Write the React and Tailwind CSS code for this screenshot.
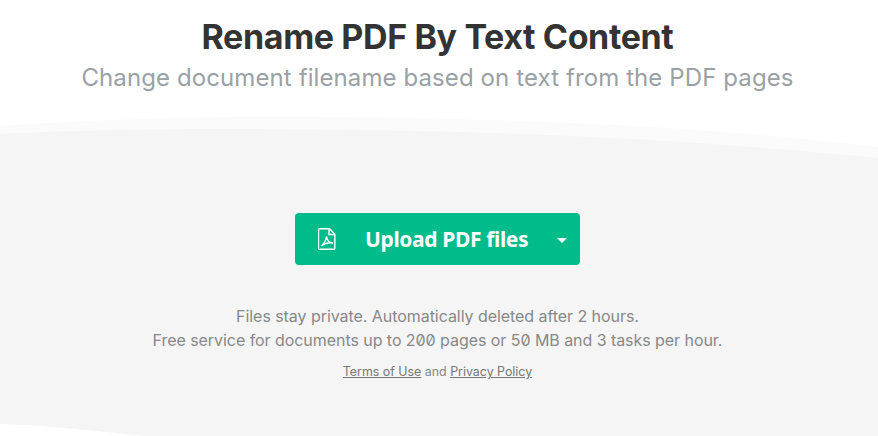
const Waves = () => (
  <svg className="absolute inset-0 w-full h-full" viewBox="0 0 878 436" preserveAspectRatio="none">
    <path d="M0 126 C 90 120 180 117 280 117 C 480 117 690 124 878 147 L878 436 L0 436 Z" fill="#fbfbfb" />
    <path d="M0 134 C 70 130 150 129 230 129 C 470 129 680 138 878 158 L878 436 L0 436 Z" fill="#f5f5f5" />
    <path d="M0 424 C 50 425 100 432 146 436 L0 436 Z" fill="#ffffff" />
  </svg>
);

const PdfIcon = () => (
  <svg width="18" height="22" viewBox="0 0 18 22" fill="none" stroke="#fff" strokeWidth="1.4">
    <path d="M1.500 .8h10l5.300 5.400v14a1 1 0 0 1-1 1H1.500a1 1 0 0 1-1-1V1.800a1 1 0 0 1 1-1z" />
    <path d="M11 .8v5.700h5.800" />
    <path d="M3 18c2.500-1.500 4.700-5 5.500-9.500.6 3.500 3 6.500 6.500 6.500-4-.6-8.500.4-12 3z" />
  </svg>
);

export default function App() {
  return (
    <div className="relative h-[436px] overflow-hidden bg-white font-['Inter',sans-serif]">
      <Waves />

      <div className="relative flex flex-col items-center pr-[3px]">
        {/* TITLE */}
        <h1 className="mt-[14px] text-[34px] leading-[46px] font-bold tracking-[-0.37px] text-[#333333]">
          Rename PDF By Text Content
        </h1>
        <p className="mt-[1px] text-[24px] leading-[34px] tracking-[0.1px] text-[#9aa1a6]">
          Change document filename based on text from the PDF pages
        </p>

        {/* UPLOAD BUTTON */}
        <button className="mt-[118px] flex items-center w-[285px] h-[52px] pl-[23px] pr-[13px] rounded-[4px] bg-[#00bc8a] text-white">
          <PdfIcon />
          <span className="ml-[29px] mt-[2px] font-['Noto_Sans',sans-serif] text-[21px] font-bold tracking-[-0.36px]">Upload PDF files</span>
          <span className="ml-auto mt-[2px] w-0 h-0 border-x-[5px] border-x-transparent border-t-[5px] border-t-white" />
        </button>

        {/* NOTES */}
        <div className="mt-[39px] text-center text-[16px] leading-[24px] tracking-[-0.055px] text-[#888888] slashed-zero">
          <p>Files stay private. Automatically deleted after 2 hours.</p>
          <p>Free service for documents up to 200 pages or 50 MB and 3 tasks per hour.</p>
        </div>
        <p className="mt-[11px] text-[12.4px] leading-[18px] text-[#888888]">
          <a className="underline text-[#777777]">Terms of Use</a> and <a className="underline text-[#777777]">Privacy Policy</a>
        </p>
      </div>
    </div>
  );
}
